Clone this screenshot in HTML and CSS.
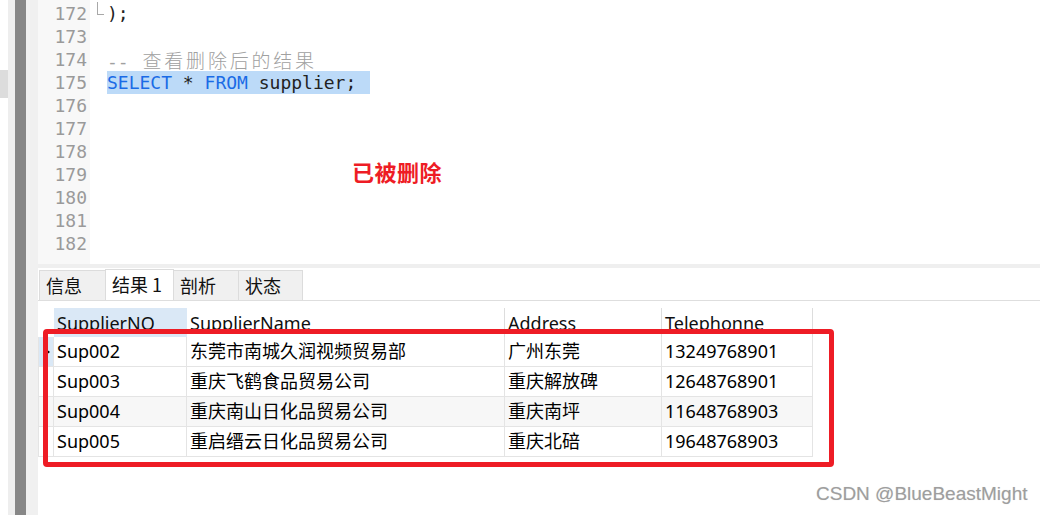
FILE: index.html
```html
<!DOCTYPE html>
<html lang="zh-CN">
<head>
<meta charset="utf-8">
<title>supplier</title>
<link rel="stylesheet" href="styles.css">
</head>
<body>
<div class="app">
  <div class="rail rail-a"><div class="rail-mark"></div></div>
  <div class="rail rail-b"></div>
  <div class="rail rail-c"></div>
  <div class="rail rail-d"></div>
  <div class="main">
    <div class="editor">
      <div class="gutter">
        <div class="ln">172</div><div class="ln">173</div><div class="ln">174</div><div class="ln">175</div><div class="ln">176</div><div class="ln">177</div><div class="ln">178</div><div class="ln">179</div><div class="ln">180</div><div class="ln">181</div><div class="ln">182</div>
      </div>
      <div class="fold"><span class="fold-end"></span></div>
      <div class="code">
        <div class="line">);</div>
        <div class="line"></div>
        <div class="line cm">-- <span class="cjk">查看删除后的结果</span></div>
        <div class="line"><span class="sel"><span class="kw">SELECT</span> * <span class="kw">FROM</span> supplier;</span></div>
        <div class="line"></div>
      </div>
      <div class="note">已被删除</div>
    </div>
    <div class="splitter"></div>
    <div class="tabs">
      <div class="tab">信息</div>
      <div class="tab active">结果 1</div>
      <div class="tab">剖析</div>
      <div class="tab">状态</div>
    </div>
    <div class="grid">
      <div class="hd ind"></div>
      <div class="hd cur">SupplierNO</div>
      <div class="hd">SupplierName</div>
      <div class="hd">Address</div>
      <div class="hd">Telephonne</div>

      <div class="c ind cur-row"><span class="tri"></span></div>
      <div class="c">Sup002</div>
      <div class="c">东莞市南城久润视频贸易部</div>
      <div class="c">广州东莞</div>
      <div class="c">13249768901</div>

      <div class="c ind"></div>
      <div class="c">Sup003</div>
      <div class="c">重庆飞鹤食品贸易公司</div>
      <div class="c">重庆解放碑</div>
      <div class="c">12648768901</div>

      <div class="c ind alt"></div>
      <div class="c alt">Sup004</div>
      <div class="c alt">重庆南山日化品贸易公司</div>
      <div class="c alt">重庆南坪</div>
      <div class="c alt">11648768903</div>

      <div class="c ind"></div>
      <div class="c">Sup005</div>
      <div class="c">重启缙云日化品贸易公司</div>
      <div class="c">重庆北碚</div>
      <div class="c">19648768903</div>
    </div>
    <div class="redbox"></div>
  </div>
  <div class="watermark">CSDN @BlueBeastMight</div>
</div>
</body>
</html>
```

FILE: styles.css
```css
* { box-sizing: border-box; }
html, body { margin: 0; padding: 0; background: #ffffff; }
body { width: 1040px; height: 515px; overflow: hidden; }

.app {
  position: relative;
  display: flex;
  height: 515px;
  font-family: "Noto Sans", "Noto Sans CJK SC", sans-serif;
}

.rail { height: 515px; flex: none; }
.rail-a { width: 8px; background: #ffffff; padding-top: 70px; }
.rail-mark { height: 28px; background: #dcdcdc; }
.rail-b { width: 7px; background: #eeeeee; }
.rail-c { width: 11px; background: #878787; }
.rail-d { width: 12px; background: #f0f0f0; }

.main { position: relative; flex: 1; display: flex; flex-direction: column; }

/* editor */
.editor { position: relative; height: 264px; display: flex; background: #ffffff; }
.gutter {
  width: 52px; flex: none; background: #f8f8f8;
  padding: 2px 3px 0 0; text-align: right;
  font-family: "DejaVu Sans Mono", "Liberation Mono", monospace;
  font-size: 18px; color: #9a9a9a;
}
.ln { height: 23px; line-height: 23px; }
.fold { width: 17px; flex: none; padding: 2px 0 0 7px; }
.fold-end {
  display: block; width: 7px; height: 13px;
  border-left: 1px solid #a8a8a8; border-bottom: 1px solid #a8a8a8;
}
.code {
  flex: 1; padding-top: 2px;
  font-family: "DejaVu Sans Mono", "Liberation Mono", "Noto Sans CJK SC", monospace;
  font-size: 18px; color: #222222;
}
.line { height: 23px; line-height: 23px; white-space: pre; }
.cm { color: #a0a0a0; }
.cjk {
  font-family: "Noto Sans CJK SC", sans-serif; font-weight: 300;
  font-size: 19px; letter-spacing: 2.8px; margin-left: 3px;
}
.sel { display: inline-block; background: #bcdaf8; padding-right: 14px; height: 23px; }
.kw { color: #1a6be6; }

.note {
  position: absolute; left: 314px; top: 159px;
  font-family: "Noto Sans CJK SC", sans-serif;
  font-size: 22px; line-height: 24px; font-weight: 700;
  color: #ee1c25; letter-spacing: 0.5px;
}

.splitter { height: 4px; background: #efefef; margin-bottom: 1px; }

/* tabs */
.tabs {
  display: flex; align-items: flex-end;
  height: 32px; border-bottom: 1px solid #dedede;
  font-family: "Noto Sans CJK SC", sans-serif; font-size: 18px; color: #111;
}
.tab {
  height: 30px; line-height: 29px;
  background: #f0f0f0; border: 1px solid #dcdcdc; border-bottom: none;
  padding-left: 6px; margin-left: -1px;
}
.tab:nth-child(1) { width: 67px; margin-left: 1px; }
.tab:nth-child(2) { width: 69px; }
.tab:nth-child(3) { width: 66px; }
.tab:nth-child(4) { width: 65px; }
.tab.active { background: #ffffff; height: 31px; line-height: 28px; position: relative; z-index: 1; }

/* grid */
.grid {
  margin-top: 7px;
  display: grid;
  grid-template-columns: 16px 133px 318px 157px 151px;
  grid-template-rows: 29px 30px 30px 30px 30px;
  font-family: "Noto Sans", "Noto Sans CJK SC", sans-serif;
  font-size: 18px; color: #000;
}
.hd {
  border-right: 1px solid #dddddd;
  padding-left: 3px; line-height: 29px; padding-top: 1px;
  white-space: nowrap; overflow: hidden; color: #101010;
}
.hd.ind { border-right: none; }
.hd.cur { background: #dae8f6; border-right: none; }
.c {
  border-right: 1px solid #e4e4e4; border-bottom: 1px solid #e4e4e4;
  padding-left: 3px; line-height: 29px;
  white-space: nowrap; overflow: hidden;
}
.c.ind { border-left: 1px solid #e4e4e4; border-right: 1px solid #e4e4e4; display: flex; align-items: center; justify-content: flex-end; padding-right: 3px; }
.cur-row { background: #dae8f6; }
.alt { background: #f7f7f7; }
.tri {
  width: 0; height: 0;
  border-top: 3px solid transparent; border-bottom: 3px solid transparent;
  border-left: 4px solid #000;
}

.redbox {
  position: absolute; left: 5px; top: 329px;
  width: 791px; height: 138px;
  border: 5px solid #ee1c25; border-radius: 4px;
}

.watermark {
  position: absolute; left: 816px; top: 483px;
  font-family: "Liberation Sans", Arial, sans-serif;
  font-size: 19px; color: #9e9e9e;
  text-shadow: 0 0 1px #d8d8d8;
}
```
